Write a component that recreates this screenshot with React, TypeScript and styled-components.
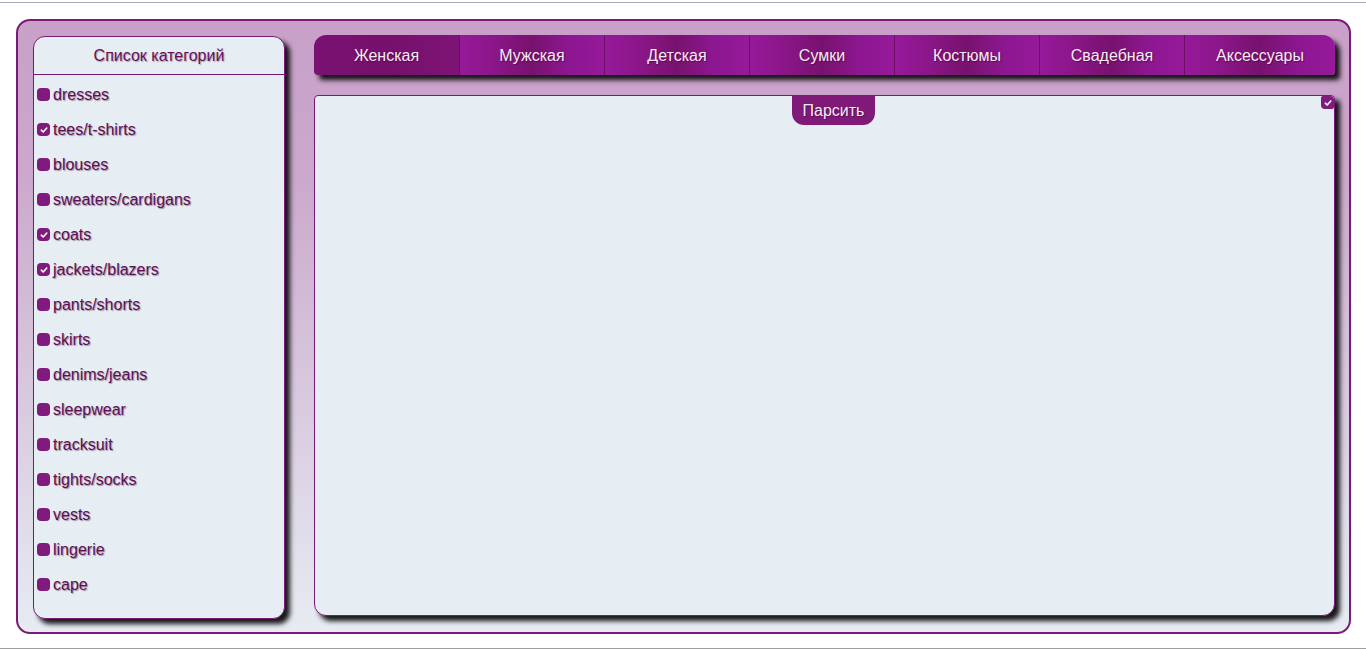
import styled, { createGlobalStyle } from "styled-components";

const GlobalStyle = createGlobalStyle`
  html, body {
    margin: 0;
    padding: 0;
    background: #ffffff;
    font-family: "Liberation Sans", Arial, sans-serif;
  }
`;

const categories = [
  { name: "dresses", checked: false },
  { name: "tees/t-shirts", checked: true },
  { name: "blouses", checked: false },
  { name: "sweaters/cardigans", checked: false },
  { name: "coats", checked: true },
  { name: "jackets/blazers", checked: true },
  { name: "pants/shorts", checked: false },
  { name: "skirts", checked: false },
  { name: "denims/jeans", checked: false },
  { name: "sleepwear", checked: false },
  { name: "tracksuit", checked: false },
  { name: "tights/socks", checked: false },
  { name: "vests", checked: false },
  { name: "lingerie", checked: false },
  { name: "cape", checked: false },
];

const tabs = ["Женская", "Мужская", "Детская", "Сумки", "Костюмы", "Свадебная", "Аксессуары"];

const Page = styled.div`
  margin-top: 2px;
  border-top: 1px solid #a9a9c0;
  border-bottom: 1px solid #a0a0a0;
  padding: 16px 15px 14px 16px;
`;

const Frame = styled.div`
  box-sizing: border-box;
  width: 1335px;
  height: 615px;
  border: 2px solid #7a1a78;
  border-radius: 14px;
  background: linear-gradient(to bottom, #c8a0c8 0%, #cba8cc 25%, #e6ecf2 100%);
  padding: 15px 14px 13px 15px;
  display: flex;
  gap: 29px;
`;

const Sidebar = styled.div`
  box-sizing: border-box;
  width: 252px;
  height: 583px;
  border: 1px solid #7a1a78;
  border-radius: 12px;
  background: #e6edf3;
  box-shadow: 5px 5px 5px rgba(0, 0, 0, 0.9);
  display: flex;
  flex-direction: column;
`;

const SidebarHeader = styled.div`
  height: 37px;
  border-bottom: 1px solid #7a1a78;
  display: flex;
  align-items: center;
  justify-content: center;
  color: #64105c;
  font-size: 16px;
  text-shadow: 1px 1px 1px #b0a0b0;
`;

const List = styled.div`
  padding-top: 2px;
  display: flex;
  flex-direction: column;
`;

const Item = styled.label`
  height: 35px;
  display: flex;
  align-items: center;
  gap: 3px;
  padding-left: 3px;
  color: #5e0e56;
  font-size: 16px;
  text-shadow: 1px 1px 1px #a090a0;
`;

const Box = styled.span<{ $round?: string }>`
  width: 13px;
  height: 13px;
  border-radius: ${(p) => p.$round ?? "4px"};
  background: #801a7e;
  display: flex;
  align-items: center;
  justify-content: center;
  flex-shrink: 0;
`;

const Main = styled.div`
  flex: 1;
  display: flex;
  flex-direction: column;
  gap: 20px;
  margin-top: -1px;
`;

const TabBar = styled.div`
  height: 40px;
  display: flex;
  border-radius: 12px 12px 4px 4px;
  overflow: hidden;
  box-shadow: 5px 5px 5px rgba(0, 0, 0, 0.9);
`;

const Tab = styled.div<{ $active?: boolean }>`
  box-sizing: border-box;
  width: 145px;
  display: flex;
  align-items: center;
  justify-content: center;
  padding-top: 2px;
  color: #f6eaf6;
  font-size: 16px;
  text-shadow: 1px 1px 1px rgba(60, 0, 50, 0.6);
  border-left: 1px solid #6c1064;
  background: ${(p) =>
    p.$active
      ? "linear-gradient(to right, #7a1272 0%, #76106c 50%, #7e1476 100%)"
      : "linear-gradient(to right, #96199a 0%, #8a1688 25%, #78126e 50%, #8c1790 75%, #96199a 100%)"};
  &:first-child {
    border-left: none;
  }
  &:last-child {
    flex: 1;
  }
`;

const Content = styled.div`
  position: relative;
  box-sizing: border-box;
  height: 521px;
  border: 1px solid #7a1a78;
  border-radius: 4px 4px 12px 12px;
  background: #e6edf3;
  box-shadow: 5px 5px 5px rgba(0, 0, 0, 0.9);
  display: flex;
  justify-content: center;
  padding-left: 18px;
`;

const ParseButton = styled.button`
  height: 29px;
  padding: 0 11px;
  border: none;
  border-radius: 0 0 12px 12px;
  background: #801a78;
  color: #f6eaf6;
  font-family: "Liberation Sans", Arial, sans-serif;
  font-size: 16px;
  text-shadow: 1px 1px 1px rgba(60, 0, 50, 0.6);
  cursor: pointer;
`;

const CornerCheck = styled.div`
  position: absolute;
  top: 0;
  right: 0;
`;

function Check() {
  return (
    <svg width="8" height="8" viewBox="0 0 8 8">
      <path d="M1.3 4.2 L3.2 6 L6.8 2" fill="none" stroke="#ffffff" strokeWidth="1.6" strokeLinecap="round" strokeLinejoin="round" />
    </svg>
  );
}

export default function App() {
  return (
    <>
      <GlobalStyle />
      <Page>
        <Frame>
          <Sidebar>
            <SidebarHeader>Список категорий</SidebarHeader>
            <List>
              {categories.map((c) => (
                <Item key={c.name}>
                  <Box>{c.checked && <Check />}</Box>
                  {c.name}
                </Item>
              ))}
            </List>
          </Sidebar>
          <Main>
            <TabBar>
              {tabs.map((t, i) => (
                <Tab key={t} $active={i === 0}>
                  {t}
                </Tab>
              ))}
            </TabBar>
            <Content>
              <ParseButton>Парсить</ParseButton>
              <CornerCheck>
                <Box $round="2px 4px 2px 4px">
                  <Check />
                </Box>
              </CornerCheck>
            </Content>
          </Main>
        </Frame>
      </Page>
    </>
  );
}
